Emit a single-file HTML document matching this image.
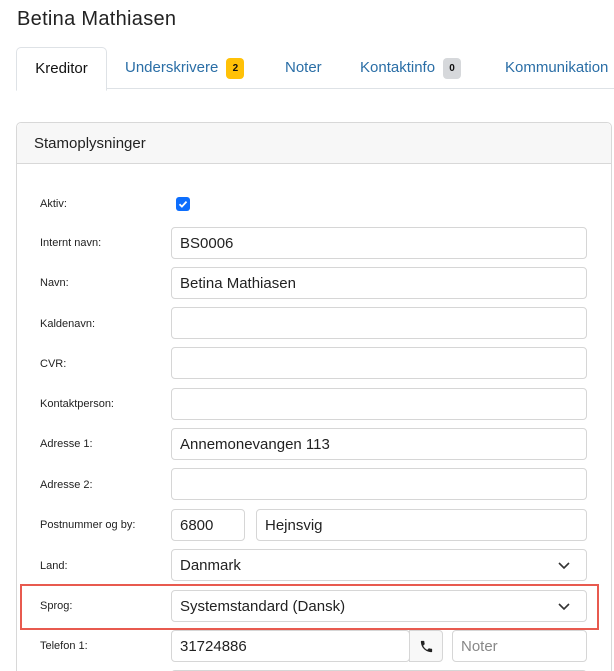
<!DOCTYPE html><html><head><style>
html,body{margin:0;width:614px;height:671px;overflow:hidden}
body{background:#fff;font-family:"Liberation Sans",sans-serif;position:relative}
.a{position:absolute}
h1{position:absolute;left:17px;top:8px;margin:0;font-size:20px;font-weight:400;color:#222;letter-spacing:.3px}
.tabbar{left:16px;top:88px;width:598px;height:1px;background:#dee2e6}
.tab{top:47px;height:42px;line-height:42px;font-size:15px;color:#2a6ea6}
.act{left:16px;width:89px;border:1px solid #dee2e6;border-bottom:1px solid #fff;border-radius:5px 5px 0 0;color:#111;text-align:center;background:#fff}
.badge{display:inline-block;font-size:10px;font-weight:700;color:#111;border-radius:4px;width:18px;height:21px;line-height:21px;text-align:center;vertical-align:middle;margin-left:8px}
.card{left:16px;top:122px;width:594px;height:600px;border:1px solid #d8d8d8;border-radius:5px}
.ch{left:17px;top:123px;width:594px;height:40px;background:#f7f7f7;border-bottom:1px solid #d8d8d8;border-radius:5px 5px 0 0}
.lab{left:40px;font-size:11px;color:#222}
.in{border:1px solid #d6d6d6;border-radius:4px;height:32px;box-sizing:border-box;font-size:15px;color:#222;line-height:32px;padding-left:8px;background:#fff}
.chev{position:absolute;right:16px;top:12px}
</style></head><body>
<h1>Betina Mathiasen</h1>
<div class="a tabbar"></div>
<div class="a tab act">Kreditor</div>
<div class="a tab" style="left:125px">Underskrivere<span class="badge" style="background:#ffc107">2</span></div>
<div class="a tab" style="left:285px">Noter</div>
<div class="a tab" style="left:360px">Kontaktinfo<span class="badge" style="background:#d6d8db">0</span></div>
<div class="a tab" style="left:505px">Kommunikation</div>
<div class="a card"></div>
<div class="a ch"></div>
<div class="a" style="left:34px;top:135px;font-size:15px;color:#222">Stamoplysninger</div>
<div class="a lab" style="top:198px">Aktiv:</div>
<div class="a" style="left:176px;top:197px;width:14px;height:14px;background:#0d6efd;border-radius:3px"><svg width="14" height="14"><path d="M3.5 7.2l2.4 2.4 4.6-5" stroke="#fff" stroke-width="1.8" fill="none"/></svg></div>

<div class="a lab" style="top:237px">Internt navn:</div><div class="a in" style="left:171px;top:227px;width:416px">BS0006</div>
<div class="a lab" style="top:277px">Navn:</div><div class="a in" style="left:171px;top:267px;width:416px">Betina Mathiasen</div>
<div class="a lab" style="top:318px">Kaldenavn:</div><div class="a in" style="left:171px;top:307px;width:416px"></div>
<div class="a lab" style="top:358px">CVR:</div><div class="a in" style="left:171px;top:347px;width:416px"></div>
<div class="a lab" style="top:398px">Kontaktperson:</div><div class="a in" style="left:171px;top:388px;width:416px"></div>
<div class="a lab" style="top:438px">Adresse 1:</div><div class="a in" style="left:171px;top:428px;width:416px">Annemonevangen 113</div>
<div class="a lab" style="top:479px">Adresse 2:</div><div class="a in" style="left:171px;top:468px;width:416px"></div>
<div class="a lab" style="top:519px">Postnummer og by:</div><div class="a in" style="left:171px;top:509px;width:74px">6800</div><div class="a in" style="left:256px;top:509px;width:331px">Hejnsvig</div>
<div class="a lab" style="top:560px">Land:</div><div class="a in" style="left:171px;top:549px;width:416px">Danmark<svg class="chev" width="12" height="8"><path d="M1 1l5 5 5-5" stroke="#333" stroke-width="1.6" fill="none"/></svg></div>
<div class="a" style="left:20px;top:584px;width:575px;height:42px;border:2px solid #e85a4f"></div>
<div class="a lab" style="top:600px">Sprog:</div><div class="a in" style="left:171px;top:590px;width:416px">Systemstandard (Dansk)<svg class="chev" width="12" height="8"><path d="M1 1l5 5 5-5" stroke="#333" stroke-width="1.6" fill="none"/></svg></div>
<div class="a lab" style="top:640px">Telefon 1:</div><div class="a in" style="left:171px;top:630px;width:239px">31724886</div>
<div class="a in" style="left:409px;top:630px;width:34px;border-radius:0 4px 4px 0;background:#f8f8f8;padding:0"><svg style="position:absolute;left:9px;top:8px" width="15" height="15" viewBox="0 0 24 24"><path d="M6.6 10.8c1.4 2.8 3.8 5.1 6.6 6.6l2.2-2.2c.3-.3.7-.4 1-.2 1.1.4 2.3.6 3.6.6.6 0 1 .4 1 1V20c0 .6-.4 1-1 1C10.6 21 3 13.4 3 4c0-.6.4-1 1-1h3.5c.6 0 1 .4 1 1 0 1.3.2 2.5.6 3.6.1.3 0 .7-.2 1z" fill="#222"/></svg></div>
<div class="a in" style="left:452px;top:630px;width:135px;color:#888">Noter</div>
<div class="a in" style="left:171px;top:670px;width:416px"></div>
</body></html>
